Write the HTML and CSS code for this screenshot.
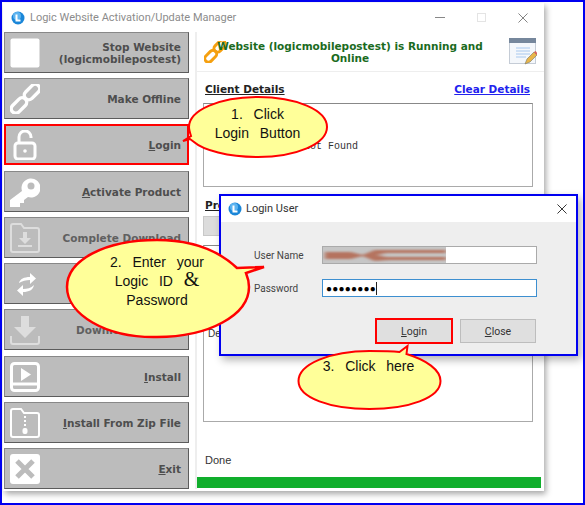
FILE: index.html
```html
<!DOCTYPE html>
<html lang="en">
<head>
    <meta charset="UTF-8">
    <title>Logic Website Activation/Update Manager</title>
    <link rel="stylesheet" href="styles.css">
</head>
<body>
    <div class="frame">
        <div class="app">
            <div class="titlebar">
                <svg class="logo" viewBox="0 0 14 14"><circle cx="7" cy="7" r="6.5" fill="#1a86d8"/><circle cx="6" cy="5" r="4" fill="#5db4f0"/><path d="M5.5 3.5v6h4" fill="none" stroke="#fff" stroke-width="2"/></svg>
                <span class="title">Logic Website Activation/Update Manager</span>
                <div class="win-controls">
                    <span class="win-min"></span>
                    <span class="win-max"></span>
                    <svg class="win-close" viewBox="0 0 11 11"><path d="M.5.5l10 10M10.5.5l-10 10" stroke="#777" fill="none"/></svg>
                </div>
            </div>
            <div class="app-body">
                <div class="menu">
                    <div class="menu-btn">
                        <svg class="menu-icon" viewBox="0 0 30 30"><rect x="0.5" y="0.5" width="29" height="29" rx="2" fill="#fff"/></svg>
                        <span>Stop Website<br>(logicmobilepostest)</span>
                    </div>
                    <div class="menu-btn">
                        <svg class="menu-icon" viewBox="0 0 30 30"><g fill="none" stroke="#fff" stroke-width="3.4"><rect x="13" y="3.5" width="18" height="9" rx="4.5" transform="rotate(-45 22 8)"/><rect x="0" y="17" width="18" height="9" rx="4.5" transform="rotate(-45 9 21.5)"/></g></svg>
                        <span>Make Offline</span>
                    </div>
                    <div class="menu-btn menu-btn-active">
                        <svg class="menu-icon" viewBox="0 0 30 30"><path d="M9 13V7a6 6 0 0 1 12 0v1" fill="none" stroke="#fff" stroke-width="3"/><rect x="5" y="13" width="20" height="16" rx="3" fill="none" stroke="#fff" stroke-width="3"/><circle cx="15" cy="21" r="1.8" fill="#fff"/></svg>
                        <span><u>L</u>ogin</span>
                    </div>
                    <div class="menu-btn">
                        <svg class="menu-icon" viewBox="0 0 30 30"><path d="M12 14a9.500 9.500 0 1 1 6 6l-4 3v3h-4v4H0v-7l12-9z" fill="#fff"/><circle cx="21" cy="9" r="3.500" fill="#bcbcbc"/></svg>
                        <span><u>A</u>ctivate Product</span>
                    </div>
                    <div class="menu-btn menu-btn-dim">
                        <svg class="menu-icon" viewBox="0 0 30 30"><path d="M1 27V3a2 2 0 0 1 2-2h8l3 4h13a2 2 0 0 1 2 2v20a2 2 0 0 1-2 2H3a2 2 0 0 1-2-2z" fill="none" stroke="#ddd" stroke-width="2"/><path d="M13 9h4v6h4l-6 6-6-6h4zM8 22h14v2H8z" fill="#ddd"/></svg>
                        <span>Complete Download</span>
                    </div>
                    <div class="menu-btn">
                        <svg class="menu-icon" viewBox="0 0 30 30"><path d="M9 14c1-4 5-6 11-6V4l6 5.500-6 5.500v-4c-4 0-8 1-11 3zM24 16c-1 5-5 7-11 7v4l-6-5.500 6-5.500v4c4 0 8-1 11-4z" fill="#fff"/></svg>
                    </div>
                    <div class="menu-btn menu-btn-dim">
                        <svg class="menu-icon" viewBox="0 0 30 30"><path d="M11 1h8v11h7L15 23 4 12h7z" fill="#ddd"/><path d="M1 21v6a2 2 0 0 0 2 2h24a2 2 0 0 0 2-2v-6" fill="none" stroke="#ddd" stroke-width="2"/></svg>
                        <span>Download Update</span>
                    </div>
                    <div class="menu-btn">
                        <svg class="menu-icon" viewBox="0 0 30 30"><rect x="1.500" y="1.500" width="27" height="27" rx="3" fill="none" stroke="#fff" stroke-width="3"/><path d="M1 22h28" stroke="#fff" stroke-width="3"/><path d="M11 6l10 6.500-10 6.500z" fill="#fff"/></svg>
                        <span><u>I</u>nstall</span>
                    </div>
                    <div class="menu-btn">
                        <svg class="menu-icon" viewBox="0 0 30 30"><path d="M1 27V3a2 2 0 0 1 2-2h8l3 4h13a2 2 0 0 1 2 2v20a2 2 0 0 1-2 2H3a2 2 0 0 1-2-2z" fill="none" stroke="#fff" stroke-width="2"/><path d="M14 8h2v2h-2zM14 12h2v2h-2zM14 16h2v2h-2z" fill="#fff"/><rect x="12.500" y="20" width="5" height="6" rx="2" fill="#fff"/></svg>
                        <span><u>I</u>nstall From Zip File</span>
                    </div>
                    <div class="menu-btn">
                        <svg class="menu-icon" viewBox="0 0 30 30"><rect width="30" height="30" rx="3" fill="#fff"/><path d="M7 7l16 16M23 7L7 23" stroke="#bcbcbc" stroke-width="5"/></svg>
                        <span><u>E</u>xit</span>
                    </div>
                </div>
                <div class="panel">
                    <div class="status">
                        <svg class="status-link" viewBox="0 0 24 24"><g fill="none" stroke="#f5a010" stroke-width="3.2"><rect x="10" y="2" width="15" height="8" rx="4" transform="rotate(-45 17 6)"/><rect x="0" y="13" width="15" height="8" rx="4" transform="rotate(-45 7 17)"/></g></svg>
                        <p class="status-text">Website (logicmobilepostest) is Running and Online</p>
                        <svg class="status-note" viewBox="0 0 28 28"><rect x="0.500" y="0.500" width="26" height="25" fill="#f4f7fb" stroke="#c5ccd6"/><rect x="0" y="0" width="27" height="5" fill="#76879c"/><path d="M7 10h14M7 13h14M7 16h14M7 19h10" stroke="#a8c8ee"/><path d="M16 26l2-5 7-7 3 3-7 7z" fill="#e8b54a" stroke="#776" stroke-width=".6"/><path d="M25 14l1.500-1 2 2-1 2z" fill="#d9605a"/></svg>
                    </div>
                    <div class="panel-main">
                        <div class="section-head">
                            <span class="section-title">Client Details</span>
                            <a class="clear-link" href="#">Clear Details</a>
                        </div>
                        <pre class="box box-client">



                Not Found</pre>
                        <div class="section-title product-title">Product</div>
                        <div class="product-bar"></div>
                        <div class="box box-desc">Details</div>
                        <div class="done">Done</div>
                    </div>
                    <div class="progress"></div>
                </div>
            </div>
        </div>

        <div class="dialog">
            <div class="dialog-title">
                <svg class="logo" viewBox="0 0 14 14"><circle cx="7" cy="7" r="6.500" fill="#1a86d8"/><circle cx="6" cy="5" r="4" fill="#5db4f0"/><path d="M5.500 3.500v6h4" fill="none" stroke="#fff" stroke-width="2"/></svg>
                <span>Login User</span>
                <svg class="dialog-close" viewBox="0 0 11 11"><path d="M.5.500l10 10M10.500.500l-10 10" stroke="#222" fill="none"/></svg>
            </div>
            <div class="dialog-body">
                <div class="field">
                    <label>User Name</label>
                    <div class="input input-user">
                        <svg class="smudge" viewBox="0 0 124 16" preserveAspectRatio="none">
                            <filter id="smudgeBlur"><feGaussianBlur stdDeviation="2 1"/></filter>
                            <rect width="124" height="16" fill="#c6c6c6"/>
                            <g filter="url(#smudgeBlur)" fill="#b5735f">
                                <path d="M2 5h26l12 3 12-5h72v3H64l-10 2 10 2h60v3H66l-14 1-12-5-12 3H2z"/>
                            </g>
                        </svg>
                    </div>
                </div>
                <div class="field">
                    <label>Password</label>
                    <div class="input input-pass">&#9679;&#9679;&#9679;&#9679;&#9679;&#9679;&#9679;&#9679;<span class="caret"></span></div>
                </div>
                <div class="dialog-actions">
                    <div class="dlg-btn dlg-btn-login"><u>L</u>ogin</div>
                    <div class="dlg-btn"><u>C</u>lose</div>
                </div>
            </div>
        </div>

        <div class="callout callout-one">
            <svg viewBox="0 0 148 64"><path d="M9 44L2 46 10 41C9 38 8 35 8 32 8 15 39 2 77 2s69 13 69 30-31 30-69 30C47 62 22 55 13 47z" fill="#ffff99" stroke="#f00" stroke-width="2"/></svg>
            <div class="callout-text">1.&nbsp; Click<br>Login&nbsp; Button</div>
        </div>
        <div class="callout callout-two">
            <svg viewBox="0 0 200 102"><path d="M2 50C2 23 40 3 92 3c36 0 62 11 80 28l27-1-18 6c2 5 3 9 3 14 0 28-40 50-92 50C40 101 2 77 2 50z" fill="#ffff99" stroke="#f00" stroke-width="2.500"/></svg>
            <div class="callout-text">2.&nbsp; Enter&nbsp; your<br>Logic&nbsp; ID&nbsp; <span class="amp">&amp;</span><br>Password</div>
        </div>
        <div class="callout callout-three">
            <svg viewBox="0 0 148 68"><path d="M74 8C85 8 95 8 104 9l8-6-1 8c20 6 34 16 34 27 0 17-32 28-71 28S3 55 3 38 35 8 74 8z" fill="#ffff99" stroke="#f00" stroke-width="2"/></svg>
            <div class="callout-text">3.&nbsp; Click&nbsp; here</div>
        </div>
    </div>
</body>
</html>
```
FILE: styles.css
```css
* {
    margin: 0;
    padding: 0;
    box-sizing: border-box;
}

body {
    font-family: "Liberation Sans", Arial, sans-serif;
    background-color: white;
}

.frame {
    position: relative;
    width: 585px;
    height: 505px;
    border: 2px solid #0000f0;
    overflow: hidden;
    padding: 1px 0 0 1px;
}

.app {
    width: 541px;
    height: 488px;
    background-color: white;
    box-shadow: 2px 3px 6px rgba(0, 0, 0, 0.35);
}

.titlebar {
    display: flex;
    align-items: center;
    height: 29px;
    padding-left: 8px;
}

.logo {
    width: 14px;
    height: 14px;
    flex: none;
}

.title {
    margin-left: 5px;
    font-family: Roboto, sans-serif;
    font-size: 11px;
    color: #8c8c8c;
    flex: 1;
}

.win-controls {
    display: flex;
    align-items: center;
    gap: 32px;
    padding-right: 16px;
}

.win-min {
    width: 10px;
    height: 1px;
    background-color: #888;
}

.win-max {
    width: 9px;
    height: 9px;
    border: 1px solid #e4e4e4;
}

.win-close {
    width: 10px;
    height: 10px;
}

.app-body {
    display: flex;
    height: 457px;
    padding-left: 1px;
}

.menu {
    width: 185px;
    display: flex;
    flex-direction: column;
    justify-content: space-between;
}

.menu-btn {
    display: flex;
    align-items: center;
    justify-content: space-between;
    height: 41px;
    padding: 1px 7px 0 5px;
    background-color: #bcbcbc;
    border: 1px solid #5c5c5c;
    border-top-color: #888;
    border-left-color: #888;
    font-family: "DejaVu Sans", sans-serif;
    font-size: 10.5px;
    font-weight: bold;
    line-height: 12px;
    color: #4e4e4e;
    text-align: right;
}

.menu-btn-active {
    outline: 2px solid #f00;
    outline-offset: -2px;
}

.menu-btn-dim span {
    color: #606060;
}

.menu-icon {
    width: 30px;
    height: 30px;
    flex: none;
}

.panel {
    flex: 1;
    display: flex;
    flex-direction: column;
    margin-left: 6px;
    border-left: 2px solid #eee;
}

.status {
    display: flex;
    align-items: center;
    height: 40px;
    padding: 0 7px 0 7px;
    border-bottom: 1px solid #eee;
}

.status-link {
    width: 22px;
    height: 22px;
    flex: none;
    margin-right: -11px;
}

.status-text {
    width: 270px;
    flex: none;
    font-family: "DejaVu Sans", sans-serif;
    font-size: 10.5px;
    font-weight: bold;
    line-height: 12px;
    color: #1b6b1e;
    text-align: center;
}

.status-note {
    width: 28px;
    height: 28px;
    flex: none;
    margin-left: auto;
}

.panel-main {
    flex: 1;
    padding: 11px 11px 0 6px;
}

.section-head {
    display: flex;
    justify-content: space-between;
    padding: 0 3px 0 2px;
    height: 20px;
}

.section-title {
    font-family: "DejaVu Sans", sans-serif;
    font-size: 10.5px;
    font-weight: bold;
    color: #222;
    text-decoration: underline;
}

.clear-link {
    font-family: "DejaVu Sans", sans-serif;
    font-size: 10.5px;
    font-weight: bold;
    color: #2222ee;
}

.box {
    border: 1px solid #aaa;
    border-top-color: #888;
    background-color: white;
}

.box-client {
    height: 84px;
    font-family: "Liberation Mono", monospace;
    font-size: 10px;
    line-height: 12px;
    padding: 1px 4px 0;
    color: #333;
}

.product-title {
    margin: 12px 0 0 2px;
}

.product-bar {
    height: 20px;
    width: 60px;
    margin-top: 5px;
    background-color: #dcdcdc;
    border: 1px solid #c8c8c8;
}

.box-desc {
    height: 177px;
    margin-top: 9px;
    padding: 82px 0 0 4px;
    font-size: 10px;
    color: #333;
}

.done {
    margin: 32px 0 0 2px;
    font-size: 11px;
    color: #333;
}

.progress {
    height: 11px;
    margin: 0 3px 1px 0;
    background-color: #10ae2c;
}

.dialog {
    position: absolute;
    left: 217px;
    top: 192px;
    width: 359px;
    height: 162px;
    display: flex;
    flex-direction: column;
    border: 2px solid #0000f0;
    background-color: #eeeeee;
    box-shadow: 3px 4px 8px rgba(0, 0, 0, 0.3);
}

.dialog-title {
    display: flex;
    align-items: center;
    gap: 4px;
    height: 26px;
    flex: none;
    padding: 0 9px 1px 7px;
    background-color: white;
    font-family: Roboto, sans-serif;
    font-size: 11px;
    color: #333;
}

.dialog-close {
    margin-left: auto;
    width: 10px;
    height: 10px;
}

.dialog-body {
    padding: 24px 39px 0 33px;
}

.field {
    display: flex;
    align-items: center;
    height: 18px;
    margin-bottom: 15px;
}

.field label {
    width: 68px;
    font-family: Roboto, sans-serif;
    font-size: 10px;
    color: #444;
}

.input {
    flex: 1;
    height: 18px;
    display: flex;
    align-items: center;
    background-color: white;
    border: 1px solid #aaa;
    font-size: 10px;
    letter-spacing: 0.2px;
    padding-left: 3px;
}

.input-user {
    padding-left: 0;
}

.input-pass {
    border-color: #3d8fd0;
}

.smudge {
    width: 123px;
    height: 16px;
}

.caret {
    width: 1px;
    height: 13px;
    background-color: #222;
}

.dialog-actions {
    display: flex;
    justify-content: flex-end;
    align-items: center;
    gap: 7px;
    margin: 21px 1px 0 0;
}

.dlg-btn {
    width: 76px;
    height: 24px;
    display: flex;
    align-items: center;
    justify-content: center;
    background-color: #dfdfdf;
    border: 1px solid #bdbdbd;
    font-family: Roboto, sans-serif;
    font-size: 10.5px;
    color: #333;
}

.dlg-btn-login {
    width: 78px;
    height: 26px;
    border: 2px solid #f00;
}

.callout {
    position: absolute;
    display: flex;
    flex-direction: column;
    align-items: center;
    font-size: 14px;
    color: #111;
    text-align: center;
}

.callout svg {
    position: absolute;
    left: 0;
    top: 0;
    width: 100%;
    height: 100%;
}

.callout-text {
    position: relative;
    line-height: 19px;
    word-spacing: 1.5px;
}

.amp {
    font-family: "Liberation Serif", serif;
    font-size: 20px;
    line-height: 0;
}

.callout-one {
    left: 179px;
    top: 93px;
    width: 148px;
    height: 64px;
    padding: 10px 0 0 5px;
}

.callout-two {
    left: 63px;
    top: 235px;
    width: 200px;
    height: 102px;
    padding: 16px 16px 0 0;
}

.callout-three {
    left: 291px;
    top: 341px;
    width: 153px;
    height: 68px;
    padding: 14px 2px 0 0;
}
```
